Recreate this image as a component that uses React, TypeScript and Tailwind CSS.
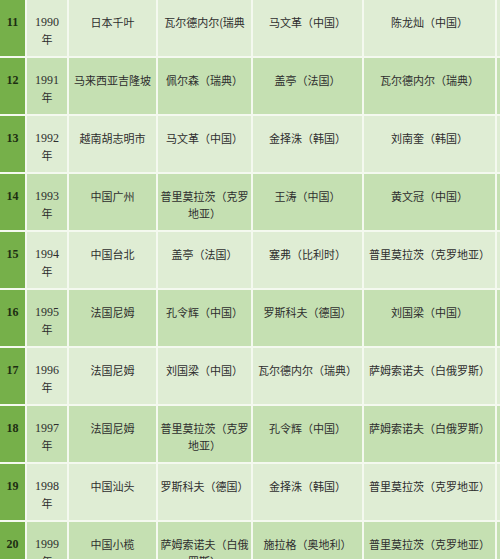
import React from 'react';

// ─── Table data: each cell is a list of lines ──────────────────────────────
type Row = {
  no: string;
  year: string;
  city: string;
  champion: string[];
  second: string[];
  third: string[];
};

const rows: Row[] = [
  { no: '11', year: '1990', city: '日本千叶', champion: ['瓦尔德内尔(瑞典'], second: ['马文革（中国）'], third: ['陈龙灿（中国）'] },
  { no: '12', year: '1991', city: '马来西亚吉隆坡', champion: ['佩尔森（瑞典）'], second: ['盖亭（法国）'], third: ['瓦尔德内尔（瑞典）'] },
  { no: '13', year: '1992', city: '越南胡志明市', champion: ['马文革（中国）'], second: ['金择洙（韩国）'], third: ['刘南奎（韩国）'] },
  { no: '14', year: '1993', city: '中国广州', champion: ['普里莫拉茨（克罗', '地亚）'], second: ['王涛（中国）'], third: ['黄文冠（中国）'] },
  { no: '15', year: '1994', city: '中国台北', champion: ['盖亭（法国）'], second: ['塞弗（比利时）'], third: ['普里莫拉茨（克罗地亚）'] },
  { no: '16', year: '1995', city: '法国尼姆', champion: ['孔令辉（中国）'], second: ['罗斯科夫（德国）'], third: ['刘国梁（中国）'] },
  { no: '17', year: '1996', city: '法国尼姆', champion: ['刘国梁（中国）'], second: ['瓦尔德内尔（瑞典）'], third: ['萨姆索诺夫（白俄罗斯）'] },
  { no: '18', year: '1997', city: '法国尼姆', champion: ['普里莫拉茨（克罗', '地亚）'], second: ['孔令辉（中国）'], third: ['萨姆索诺夫（白俄罗斯）'] },
  { no: '19', year: '1998', city: '中国汕头', champion: ['罗斯科夫（德国）'], second: ['金择洙（韩国）'], third: ['普里莫拉茨（克罗地亚）'] },
  { no: '20', year: '1999', city: '中国小榄', champion: ['萨姆索诺夫（白俄', '罗斯）'], second: ['施拉格（奥地利）'], third: ['普里莫拉茨（克罗地亚）'] },
];

const cjk = "font-['Noto_Sans_CJK_SC',sans-serif]";

function Lines({ lines }: { lines: string[] }) {
  return (
    <>
      {lines.map((l, i) => (
        <div key={i} className="whitespace-nowrap">
          {l}
        </div>
      ))}
    </>
  );
}

export default function App() {
  return (
    <div className="w-[500px] h-[559px] overflow-hidden bg-[#f4f9ef]">
      <div className="grid grid-cols-[25px_40px_87px_93px_109px_131px_3px] auto-rows-[56px] gap-[2px] text-[11px] leading-[17px] text-[#2e2e2e]">
        {rows.map(r => {
          const odd = Number(r.no) % 2 === 1;
          const bg = odd ? 'bg-[#dfedd4]' : 'bg-[#c5e0b2]';
          return (
            <React.Fragment key={r.no}>
              <div className="bg-[#76b04a] flex justify-center pt-[14px] font-['Liberation_Serif',serif] font-bold text-[12px] text-[#1d2e12]">
                {r.no}
              </div>
              <div className={`${bg} flex flex-col items-center pt-[14px]`}>
                <div className="font-['Liberation_Serif',serif] text-[12px]">{r.year}</div>
                <div className={cjk}>年</div>
              </div>
              <div className={`${bg} ${cjk} flex flex-col items-center pt-[14px]`}>
                <Lines lines={[r.city]} />
              </div>
              <div className={`${bg} ${cjk} flex flex-col items-center pt-[14px] overflow-hidden`}>
                <Lines lines={r.champion} />
              </div>
              <div className={`${bg} ${cjk} flex flex-col items-center pt-[14px]`}>
                <Lines lines={r.second} />
              </div>
              <div className={`${bg} ${cjk} flex flex-col items-center pt-[14px]`}>
                <Lines lines={r.third} />
              </div>
              <div className={bg} />
            </React.Fragment>
          );
        })}
      </div>
    </div>
  );
}
